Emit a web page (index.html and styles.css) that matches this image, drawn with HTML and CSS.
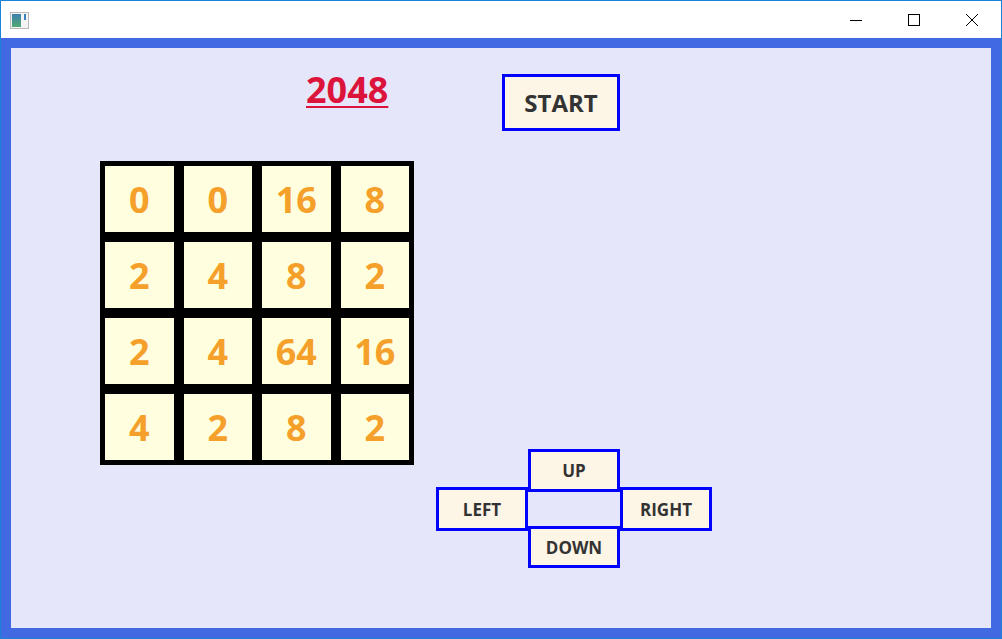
FILE: index.html
```html
<!DOCTYPE html>
<html lang="en">
<head>
    <meta charset="UTF-8">
    <title>2048</title>
    <link rel="stylesheet" href="styles.css">
</head>
<body>
    <div class="window">
        <div class="titlebar">
            <svg class="app-icon" width="19" height="17" viewBox="0 0 19 17">
                <defs>
                    <linearGradient id="pane" x1="0" y1="0" x2="0" y2="1">
                        <stop offset="0" stop-color="#3f7fb0"/>
                        <stop offset="1" stop-color="#4fa872"/>
                    </linearGradient>
                </defs>
                <rect x="0.5" y="0.5" width="18" height="16" fill="#f4f4f4" stroke="#b9b9b9"/>
                <rect x="2" y="2" width="9" height="13" fill="url(#pane)"/>
                <rect x="14" y="2" width="2" height="6" fill="#3c7fc0"/>
            </svg>
            <div class="caption">
                <span class="cap-btn">
                    <svg width="14" height="14" viewBox="0 0 14 14"><path d="M1 7.5h12" stroke="#000" stroke-width="1"/></svg>
                </span>
                <span class="cap-btn">
                    <svg width="14" height="14" viewBox="0 0 14 14"><rect x="1.5" y="1.5" width="11" height="11" fill="none" stroke="#000"/></svg>
                </span>
                <span class="cap-btn">
                    <svg width="14" height="14" viewBox="0 0 14 14"><path d="M1 1l12 12M13 1L1 13" stroke="#000" stroke-width="1"/></svg>
                </span>
            </div>
        </div>

        <div class="frame">
            <div class="content">
                <div class="top">
                    <h1 class="title">2048</h1>
                    <button class="start">START</button>
                </div>

                <div class="main">
                    <div class="board">
                        <div class="cell">0</div>
                        <div class="cell">0</div>
                        <div class="cell">16</div>
                        <div class="cell">8</div>
                        <div class="cell">2</div>
                        <div class="cell">4</div>
                        <div class="cell">8</div>
                        <div class="cell">2</div>
                        <div class="cell">2</div>
                        <div class="cell">4</div>
                        <div class="cell">64</div>
                        <div class="cell">16</div>
                        <div class="cell">4</div>
                        <div class="cell">2</div>
                        <div class="cell">8</div>
                        <div class="cell">2</div>
                    </div>

                    <div class="pad">
                        <button class="dir up">UP</button>
                        <button class="dir left">LEFT</button>
                        <button class="dir right">RIGHT</button>
                        <button class="dir down">DOWN</button>
                    </div>
                </div>
            </div>
        </div>
    </div>
</body>
</html>
```

FILE: styles.css
```css
body { margin: 0; font-family: "Open Sans", "Noto Sans", sans-serif; }
.window { width: 1000px; height: 637px; border: 1px solid #1883d7; background: #fff; }

.titlebar { height: 37px; display: flex; align-items: center; background: #fff; }
.app-icon { margin-left: 9px; margin-top: 1px; }
.caption { margin-left: auto; display: flex; margin-right: 0; }
.cap-btn { width: 58px; height: 37px; display: flex; align-items: center; justify-content: center; }

.frame { background: #4169e1; padding: 10px; }
.content { height: 580px; background: #e6e6fa; }

.top { display: flex; align-items: flex-start; padding-top: 26px; }
.title { margin: -4px 0 0 295px; width: 196px; font-size: 36px; line-height: 40px; font-weight: 700; color: #dc143c; text-decoration: underline; text-decoration-thickness: 2px; text-underline-offset: 3px; }
.start { width: 118px; height: 57px; padding: 0; border: 3px solid #0000ff; background: #fdf5e6; color: #333; font-family: inherit; font-size: 24px; font-weight: 700; }

.main { display: flex; align-items: flex-start; margin-top: 30px; }
.board { margin-left: 89px; display: grid; grid-template-columns: repeat(4, 68.5px); grid-template-rows: repeat(4, 66px); gap: 10px; padding: 5px; background: #000; }
.cell { background: #ffffe0; display: flex; align-items: center; justify-content: center; color: #f5a02a; font-size: 36px; font-weight: 700; }

.pad { margin: 288px 0 0 22px; display: grid; grid-template-columns: repeat(3, 92px); grid-template-rows: 38px 5px 34px 5px 37px; }
.dir { padding: 0; border: 3px solid #0000ff; background: #fdf5e6; color: #333; font-family: inherit; font-size: 17px; font-weight: 700; }
.up { grid-column: 2; grid-row: 1 / 3; }
.left { grid-column: 1; grid-row: 2 / 5; }
.right { grid-column: 3; grid-row: 2 / 5; }
.down { grid-column: 2; grid-row: 4 / 6; }
```
